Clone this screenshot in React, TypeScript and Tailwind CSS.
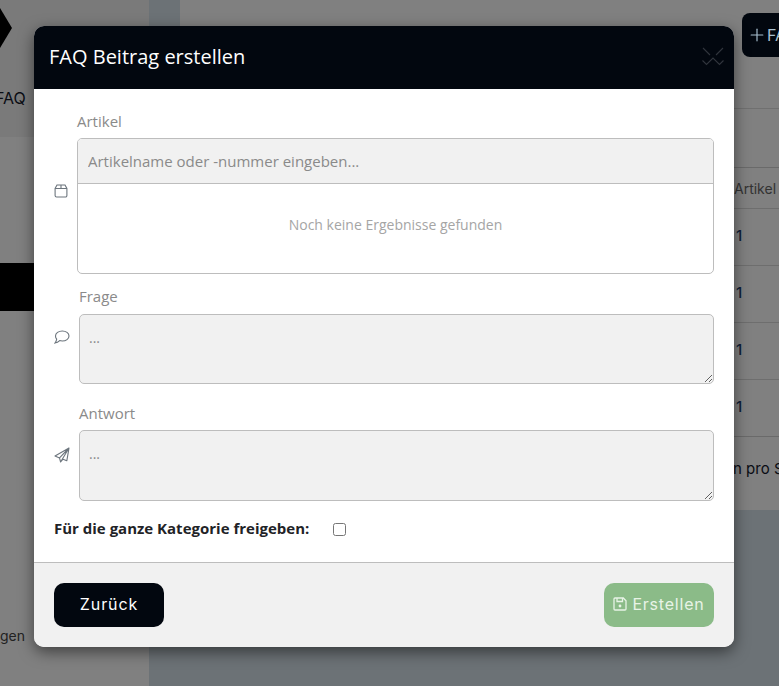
import { Plus } from "lucide-react";

const sans = "font-['Open_Sans',sans-serif]";
const round = "font-['Inter',sans-serif]";

function Row({ label, icon, iconClass, children, labelClass }: { label: string; icon: React.ReactNode; iconClass: string; children: React.ReactNode; labelClass: string }) {
  return (
    <div className="flex items-center">
      <div className={`w-[23px] shrink-0 text-[#6c757d] ${iconClass}`}>{icon}</div>
      <div className="flex-1 min-w-0">
        <div className={`text-[15px] leading-[21px] text-[#8a8a8a] ${labelClass}`}>{label}</div>
        {children}
      </div>
    </div>
  );
}

function Area({ h }: { h: string }) {
  return (
    <textarea
      placeholder="..."
      className={`block w-full ${h} rounded-[5px] border border-[#bdbdbd] bg-[#f1f1f1] px-[9px] pt-[12px] text-[14px] text-[#777] placeholder:text-[#8a8a8a] outline-none ${sans}`}
    />
  );
}

function BoxIcon() {
  return (
    <svg width="14" height="14" viewBox="0 0 14 14" fill="none" stroke="currentColor" strokeWidth="1.1" className="block">
      <path d="M3 1 H11 L12.9 4.5 V11.5 A1.5 1.5 0 0 1 11.4 13 H2.6 A1.5 1.5 0 0 1 1.1 11.5 V4.5 Z M1.1 4.5 H12.9 M7 1 V4.5" />
    </svg>
  );
}

function CommentIcon() {
  return (
    <svg width="16" height="14" viewBox="0 0 16 14" fill="none" stroke="currentColor" strokeWidth="1.1" className="block">
      <path d="M8.3 1 C12 1 15 3.1 15 6 C15 8.9 12 11 8.3 11 C7.4 11 6.5 10.9 5.7 10.6 C4.4 11.9 2.8 12.8 1 13 C1.9 11.9 2.4 10.6 2.7 9.1 C1.9 8.3 1.5 7.2 1.5 6 C1.5 3.1 4.6 1 8.3 1 Z" />
    </svg>
  );
}

function PlaneIcon() {
  return (
    <svg width="16" height="16" viewBox="0 0 16 16" fill="none" stroke="currentColor" strokeWidth="1.1" strokeLinejoin="round" className="block">
      <path d="M15 1 L1 9 L5.5 10.9 L6.6 15 L9 12.2 L12.8 13.8 Z M15 1 L5.5 10.9 M15 1 L6.6 15" />
    </svg>
  );
}

function SaveIcon() {
  return (
    <svg width="14" height="14" viewBox="0 0 14 14" fill="none" stroke="currentColor" strokeWidth="1.3" className="block shrink-0">
      <path d="M2 1 H10.3 L13 3.7 V12 A1 1 0 0 1 12 13 H2 A1 1 0 0 1 1 12 V2 A1 1 0 0 1 2 1 Z M4 1 V4.5 H9.5 V1" />
      <circle cx="7" cy="9" r="1.4" fill="currentColor" stroke="none" />
    </svg>
  );
}

export default function App() {
  return (
    <div className="relative h-[686px] w-[779px] overflow-hidden bg-[#6c7276] flex">
      <aside className="w-[149px] shrink-0 bg-[#808080] flex flex-col">
        <div className="h-[137px] bg-[#7a7a7a] flex flex-col">
          <svg width="12" height="58" viewBox="0 0 12 58" className="fill-black">
            <path d="M0 8 L12 28 L0 48 Z" />
          </svg>
          <div className={`mt-[28px] -ml-[5px] text-[16px] text-[#0a0d14] ${round}`}>FAQ</div>
        </div>
        <div className="mt-[126px] h-[48px] bg-black" />
        <div className={`mt-[314px] text-[14px] text-[#222] ${round}`}>gen</div>
      </aside>
      <main className="flex-1 min-w-0 pl-[31px]">
        <div className="h-[510px] bg-[#808080]">
          <div className="flex justify-end pt-[13px]">
            <div className={`h-[44px] w-[37px] rounded-l-[8px] bg-[#02070f] text-[#a8c0d0] flex items-center pl-[5px] text-[16px] whitespace-nowrap overflow-hidden ${round}`}>
              <Plus size={20} strokeWidth={1.4} className="shrink-0" />
              <span>FAQ</span>
            </div>
          </div>
          <div className="mt-[51px] h-[59px] border-t border-[#707070]" />
          <div className="h-[41px] border-t border-[#6a6a6a] flex items-center justify-end">
            <span className={`w-[45px] overflow-hidden text-[14px] text-[#333] ${round}`}>Artikel</span>
          </div>
          {[0, 1, 2, 3].map((i) => (
            <div key={i} className="h-[57px] border-t border-[#6e6e6e] flex items-center justify-end pb-[1px]">
              <span className={`w-[43px] text-[15px] font-medium text-[#0e2138] ${round}`}>1</span>
            </div>
          ))}
          <div className="border-t border-[#6a6a6a] flex justify-end pt-[21px]">
            <span className={`w-[46px] overflow-hidden whitespace-nowrap text-[15px] text-[#0a0d14] ${round}`}>n pro Seite</span>
          </div>
        </div>
      </main>

      <div className="absolute left-[34px] top-[26px] w-[700px] h-[621px] rounded-[10px] overflow-hidden bg-white shadow-[0_5px_15px_rgba(0,0,0,0.5)] flex flex-col">
        <header className="h-[63px] shrink-0 bg-[#02070f] flex items-center justify-between pl-[15px] pr-[9px]">
          <h1 className={`text-[20px] font-medium text-white -mt-[2px] ${sans}`}>FAQ Beitrag erstellen</h1>
          <svg width="24" height="20" viewBox="0 0 24 20" fill="none" stroke="#30343c" strokeWidth="1.1" className="-mt-[2px]">
            <path d="M2 1 L9 8 M22 1 L15 8 M1.5 13.5 L5.5 17.5 L12 11 L18.5 17.5 L22.5 13.5" />
          </svg>
        </header>
        <div className={`flex-1 flex flex-col px-[20px] pt-[22px] ${sans}`}>
          <Row label="Artikel" labelClass="" iconClass="mb-[3px]" icon={<BoxIcon />}>
            <div className="mt-[6px] h-[136px] rounded-[5px] border border-[#bdbdbd] overflow-hidden flex flex-col">
              <input
                placeholder="Artikelname oder -nummer eingeben..."
                className={`h-[45px] shrink-0 bg-[#f1f1f1] border-b border-[#bdbdbd] px-[10px] text-[15px] outline-none placeholder:text-[#8a8a8a] ${sans}`}
              />
              <div className="flex-1 flex items-center justify-center pb-[8px] text-[14px] text-[#a5a5a5]">Noch keine Ergebnisse gefunden</div>
            </div>
          </Row>
          <div className="mt-[12px]">
            <Row label="Frage" labelClass="ml-[2px]" iconClass="mt-[4px]" icon={<CommentIcon />}>
              <div className="mt-[7px] ml-[2px]"><Area h="h-[70px]" /></div>
            </Row>
          </div>
          <div className="mt-[19px]">
            <Row label="Antwort" labelClass="ml-[2px]" iconClass="mt-[5px]" icon={<PlaneIcon />}>
              <div className="mt-[6px] ml-[2px]"><Area h="h-[71px]" /></div>
            </Row>
          </div>
          <label className="mt-[16px] flex items-center text-[15px] leading-[22px] font-bold text-[#1f2327]">
            <span className="w-[279px]">Für die ganze Kategorie freigeben:</span>
            <input type="checkbox" className="appearance-none h-[13px] w-[13px] rounded-[2.5px] border border-[#767676] bg-white mt-[2px]" />
          </label>
        </div>
        <footer className={`h-[85px] shrink-0 bg-[#f1f1f1] border-t border-[#bdbdbd] flex items-center justify-between px-[20px] ${round}`}>
          <button className="h-[44px] w-[110px] rounded-[10px] bg-[#02070f] text-white text-[16px] tracking-[0.9px] pb-[3px]">Zurück</button>
          <button className="h-[44px] w-[110px] rounded-[10px] bg-[#8bbb88] text-[#e8f3e6] text-[16px] tracking-[0.8px] flex items-center justify-center gap-[5px] pb-[2px]">
            <SaveIcon />
            Erstellen
          </button>
        </footer>
      </div>
    </div>
  );
}
